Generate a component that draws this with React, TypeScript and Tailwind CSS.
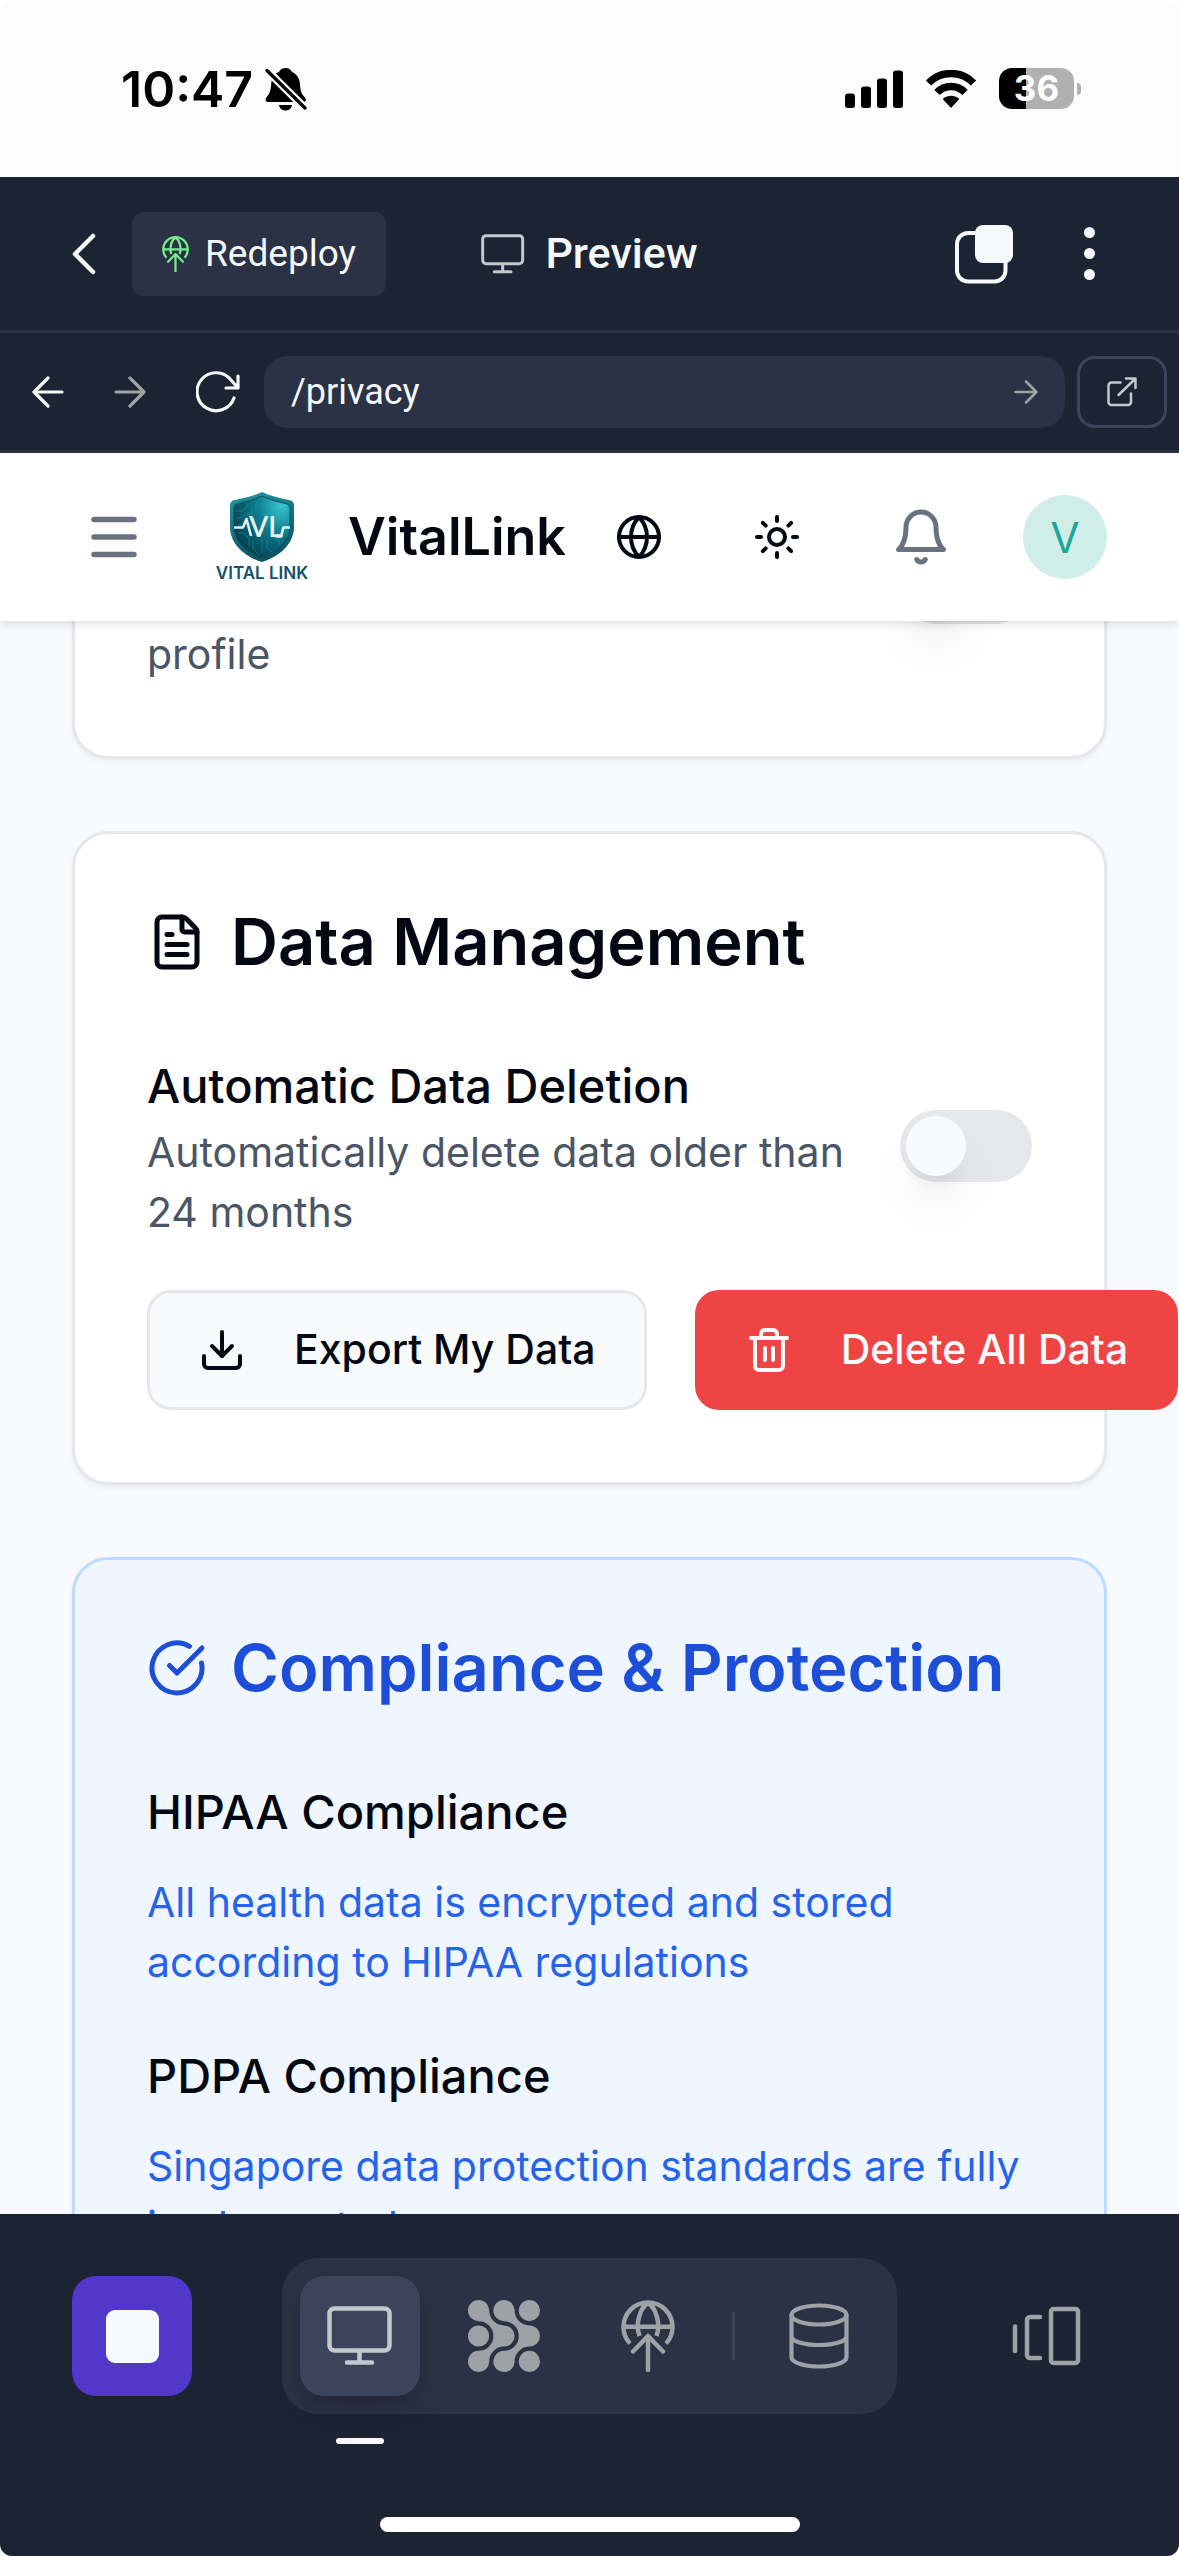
import { useState } from "react";
import type { ReactNode } from "react";
import { Menu, Globe, Sun, FileText, Download, Trash2, CircleCheckBig } from "lucide-react";

type GlyphProps = { box: string; className: string; width?: number; children: ReactNode };

function Glyph({ box, className, width = 4, children }: GlyphProps) {
  return (
    <svg
      viewBox={box}
      className={className}
      fill="none"
      stroke="currentColor"
      strokeWidth={width}
      strokeLinecap="round"
      strokeLinejoin="round"
      aria-hidden="true"
    >
      {children}
    </svg>
  );
}

function MonitorGlyph({ className }: { className: string }) {
  return (
    <Glyph box="0 0 66 60" className={className} width={4.5}>
      <rect x="2.5" y="2.5" width="60" height="42" rx="5" />
      <path d="M32.5 45v11.500M20 56.500h25" />
    </Glyph>
  );
}

function DeployGlyph({ className }: { className: string }) {
  return (
    <Glyph box="0 0 54 72" className={className} width={4.5}>
      <path strokeLinecap="butt" d="M9 43.500A24.500 24.500 0 1 1 45 43.500" />
      <path strokeLinecap="butt" d="M3 26.700H51M18.500 36C14 24 19 8 27 3C35 8 40 24 35.500 36" />
      <path d="M12 51.500L27 36L42 51.500M27 37V70" />
    </Glyph>
  );
}

function AgentGlyph() {
  const chain =
    "M21.200 10.600A10.600 10.600 0 1 0 10.600 21.200A14.800 14.800 0 0 1 25.400 36A14.800 14.800 0 0 1 10.600 50.800A10.600 10.600 0 1 0 21.200 61.400A14.800 14.800 0 0 1 36 46.600A10.600 10.600 0 0 0 36 25.400A14.800 14.800 0 0 1 21.200 10.600Z";
  return (
    <svg viewBox="0 0 72 72" className="size-[72px]" fill="currentColor" aria-hidden="true">
      <path d={chain} />
      <path d={chain} transform="translate(25.400 0)" />
      <circle cx="10.600" cy="36" r="10.600" />
      <circle cx="61.400" cy="10.600" r="10.600" />
      <circle cx="61.400" cy="61.400" r="10.600" />
    </svg>
  );
}

function StatusBar() {
  return (
    <div className="flex h-[177px] shrink-0 items-center justify-between rounded-t-xl bg-[#fcfcfc] pr-[98px] pl-[121px] text-black">
      <div className="flex items-center gap-3">
        <span className="text-[50px] leading-none font-semibold">10:47</span>
        <svg viewBox="0 0 42 44" className="h-11 w-[42px]" aria-label="Silent mode">
          <path
            fill="currentColor"
            d="M20.500 1c3 0 5.500 1.500 6.500 4 5 2 7.500 6.500 8 12 .4 7.500 1.500 10 5 13.500 1.800 2.400.8 4.500-1.500 4.500H3.500C.8 35-.2 33 1.300 30.500 5 26.500 5.700 23.500 6.200 17c.4-5.500 2.800-10 7.800-12 1-2.500 3.500-4 6.500-4zM14 38h13c-.5 3.400-3 5.500-6.500 5.500S14.500 41.400 14 38z"
          />
          <path stroke="#fcfcfc" strokeWidth="8" d="M0 1.500L42 43" />
          <path stroke="currentColor" strokeWidth="3.300" strokeLinecap="round" d="M2 3.500L40 41" />
        </svg>
      </div>
      <div className="flex items-center gap-[22px]">
        <svg viewBox="0 0 58 38" className="h-[38px] w-[58px]" fill="currentColor" aria-label="Signal">
          <rect x="0" y="23.500" width="10" height="14.500" rx="3" />
          <rect x="16" y="16.500" width="10" height="21.500" rx="3" />
          <rect x="32" y="8.500" width="10" height="29.500" rx="3" />
          <rect x="48" y="0.500" width="10" height="37.500" rx="3" />
        </svg>
        <svg viewBox="0 0 52 38" className="h-[38px] w-[52px]" fill="none" stroke="currentColor" aria-label="Wi-Fi">
          <path strokeWidth="7.500" d="M3.500 13A31.500 31.500 0 0 1 48.500 13" />
          <path strokeWidth="7.500" d="M12 22.500A19.500 19.500 0 0 1 40 22.500" />
          <path fill="currentColor" stroke="none" d="M26 38L18.300 29.800C17.900 29.300 18 28.700 18.500 28.300C22.700 24.900 29.300 24.900 33.500 28.300C34 28.700 34.100 29.300 33.700 29.800Z" />
        </svg>
        <div className="flex items-center gap-[3px]">
          <div className="flex h-[41px] w-[75px] items-center justify-center rounded-[13px] bg-linear-to-r from-black from-36% to-[#b0b0b0] to-36%">
            <span className="text-[35px] leading-none font-bold text-white">36</span>
          </div>
          <div className="h-3 w-1 rounded-r-full bg-[#b0b0b0]" />
        </div>
      </div>
    </div>
  );
}

function WorkspaceHeader() {
  return (
    <header className="grid h-[156px] shrink-0 grid-cols-[1fr_auto_1fr] items-center border-b-[3px] border-[#2b3245] bg-[#1c2333] px-[72px] font-[Roboto,sans-serif] text-[#f5f9fc]">
      <div className="flex items-center gap-9">
        <button aria-label="Back">
          <Glyph box="0 0 24 42" className="h-[42px] w-6" width={4.5}>
            <path d="M21 3L3 21L21 39" />
          </Glyph>
        </button>
        <button className="flex h-[84px] items-center gap-4 rounded-xl bg-[#2b3245] px-[30px] text-[37px]">
          <DeployGlyph className="h-9 w-[27px] text-[#75ed8b]" />
          Redeploy
        </button>
      </div>
      <h1 className="flex items-center gap-5 text-[43px] font-medium">
        <MonitorGlyph className="h-10 w-11 text-[#c2c8cc]" />
        Preview
      </h1>
      <div className="flex items-center justify-end gap-[70px] pr-3">
        <button aria-label="Open tabs">
          <Glyph box="0 0 60 60" className="size-[60px]">
            <rect x="3" y="9" width="48.500" height="48.500" rx="11" />
            <rect x="21" y="1" width="38" height="38" rx="8" fill="currentColor" stroke="none" />
          </Glyph>
        </button>
        <button aria-label="More options" className="flex w-[11px] flex-col gap-[10px]">
          <span className="size-[11px] rounded-full bg-current" />
          <span className="size-[11px] rounded-full bg-current" />
          <span className="size-[11px] rounded-full bg-current" />
        </button>
      </div>
    </header>
  );
}

function AddressBar() {
  const [path, setPath] = useState("/privacy");
  return (
    <div className="flex h-[120px] shrink-0 items-center gap-3 border-b-[3px] border-[#2b3245] bg-[#1c2333] pr-3 font-[Roboto,sans-serif] text-[#f5f9fc]">
      <nav className="flex w-[252px] items-center justify-between pr-3 pl-8">
        <button aria-label="Previous page">
          <Glyph box="0 0 32 32" className="size-8" width={3.2}>
            <path d="M30 16H2M16 2L2 16L16 30" />
          </Glyph>
        </button>
        <button aria-label="Next page" className="text-[#9da2a6]">
          <Glyph box="0 0 32 32" className="size-8" width={3.2}>
            <path d="M2 16H30M16 2L30 16L16 30" />
          </Glyph>
        </button>
        <button aria-label="Reload" className="shrink-0">
          <Glyph box="0 0 44 42" className="h-[42px] w-11" width={3.2}>
            <path d="M38 27A19 19 0 1 1 35 9L42 17M42 5V17H30" />
          </Glyph>
        </button>
      </nav>
      <div className="flex h-[72px] min-w-0 flex-1 items-center rounded-3xl bg-[#2b3245] px-[27px]">
        <input
          aria-label="Address"
          value={path}
          onChange={(event) => setPath(event.target.value)}
          className="h-[60px] min-w-0 flex-1 bg-transparent text-4xl outline-none"
        />
        <Glyph box="0 0 24 24" className="size-6 text-[#9da2a6]" width={2.5}>
          <path d="M1.500 12H22M12 1.500L22.500 12L12 22.500" />
        </Glyph>
      </div>
      <a
        href="/privacy"
        aria-label="Open in new tab"
        className="flex h-[72px] w-[90px] items-center justify-center rounded-[18px] border-[3px] border-[#3c445c] text-[#c2c8cc]"
      >
        <Glyph box="0 0 30 30" className="size-[30px]" width={2.5}>
          <path d="M13.500 5.500H4.500A3 3 0 0 0 1.500 8.500V25A3 3 0 0 0 4.500 28H21A3 3 0 0 0 24 25V16.500M19 1.500H28.500V11M28 2L11.500 18" />
        </Glyph>
      </a>
    </div>
  );
}

function VitalLogo() {
  return (
    <div className="flex w-[120px] flex-col items-center gap-1 pb-1 text-[#0f5468]">
      <svg viewBox="0 0 66 72" className="h-[72px] w-[66px]" role="img" aria-label="Vital Link shield">
        <defs>
          <linearGradient id="shieldRim" x1="0" y1="0" x2="0.300" y2="1">
            <stop offset="0" stopColor="#2196a3" />
            <stop offset="1" stopColor="#0b5366" />
          </linearGradient>
          <radialGradient id="shieldFace" cx="0.850" cy="0.150" r="0.950">
            <stop offset="0" stopColor="#3cc6d2" />
            <stop offset="0.450" stopColor="#0c8090" />
            <stop offset="1" stopColor="#053f50" />
          </radialGradient>
        </defs>
        <path fill="url(#shieldRim)" d="M33 1C41 5 51 7 62 9.500Q65 10.500 65 15V36C65 53 50 66 33 71C16 66 1 53 1 36V15Q1 10.500 4 9.500C15 7 25 5 33 1Z" />
        <path fill="url(#shieldFace)" stroke="#06505f" strokeWidth="1" d="M33 5C41 9 50 11 58 13Q61 14 61 17V36C61 50 48 62 33 67C18 62 5 50 5 36V17Q5 14 8 13C16 11 25 9 33 5Z" />
        <path
          fill="none"
          stroke="#27a9b8"
          strokeWidth="0.600"
          opacity="0.700"
          d="M6 20H14L18 16V11M7 27H12L16 23H23V16M27 20V11L31 7M36 17L42 12H50M44 20H51L56 16M52 26L57 22M9 42H15L20 48V56M24 49V58L30 64M33 48V62M38 49V57L43 61M45 46L50 50V54M48 43H56M7 34H13"
        />
        <path fill="none" stroke="#e6eff2" strokeWidth="2.600" strokeLinejoin="round" d="M5 36.500H14L17.500 28L22 45M47 45.500H52L54.500 36.500H61" />
        <text x="20" y="46" fill="#e6eff2" fontSize="28" fontWeight="600" fontFamily="Lato, sans-serif">
          VL
        </text>
      </svg>
      <span className="text-[17px] leading-3 font-semibold whitespace-nowrap">VITAL LINK</span>
    </div>
  );
}

function AppHeader() {
  return (
    <header className="relative z-10 flex h-[168px] shrink-0 items-center bg-white pr-[72px] pl-[84px] text-[#030712] shadow-[0_3px_9px_rgba(0,0,0,0.12)]">
      <button aria-label="Open menu" className="mr-[58px] text-gray-500">
        <Menu className="size-[60px]" strokeWidth={2.2} />
      </button>
      <VitalLogo />
      <span className="ml-[26px] text-[52px] leading-none font-semibold">VitalLink</span>
      <div className="ml-auto flex items-center">
        <button aria-label="Language" className="mr-[90px]">
          <Globe className="size-12" />
        </button>
        <button aria-label="Theme" className="mr-[90px]">
          <Sun className="size-12" />
        </button>
        <button aria-label="Notifications" className="mr-[72px] text-gray-500">
          <Glyph box="0 0 24 24" className="size-[60px]" width={2}>
            <path d="M6 8a6 6 0 0 1 12 0c0 7 3 9 3 9H3s3-2 3-9M10.300 21a1.940 1.940 0 0 0 3.400 0" />
          </Glyph>
        </button>
        <button aria-label="Account" className="size-[84px] rounded-full bg-[#d0ede8] text-[42px] text-[#1aa798]">
          V
        </button>
      </div>
    </header>
  );
}

function Toggle({ label }: { label: string }) {
  const [on, setOn] = useState(false);
  return (
    <label className="flex h-[72px] w-[132px] shrink-0 rounded-full bg-gray-200 p-1.5 has-checked:justify-end has-checked:bg-teal-500">
      <input type="checkbox" role="switch" aria-label={label} checked={on} onChange={() => setOn(!on)} className="sr-only" />
      <span className="size-[60px] rounded-full bg-[#f9fafb] shadow-[0_30px_45px_-9px_rgba(0,0,0,0.1),0_12px_18px_-12px_rgba(0,0,0,0.1)]" />
    </label>
  );
}

const regulations = [
  { name: "HIPAA Compliance", detail: "All health data is encrypted and stored according to HIPAA regulations" },
  { name: "PDPA Compliance", detail: "Singapore data protection standards are fully implemented" },
];

function PrivacyPage() {
  return (
    <main className="min-h-0 flex-1 overflow-hidden bg-[#f9fafc] px-[72px] text-[#030712]">
      <div className="-mt-[204px] flex flex-col gap-[72px]">
        <section className="rounded-[36px] border-[3px] border-gray-200 bg-white p-[72px] shadow-[0_3px_6px_rgba(0,0,0,0.05)]">
          <div className="flex h-[192px] items-center justify-between">
            <p className="self-end text-[41px] leading-[60px] text-gray-600">profile</p>
            <Toggle label="Profile sharing" />
          </div>
        </section>

        <section className="rounded-[36px] border-[3px] border-gray-200 bg-white p-[72px] shadow-[0_3px_6px_rgba(0,0,0,0.05)]">
          <h2 className="flex items-center gap-6 text-[65px] leading-[72px] font-semibold whitespace-nowrap">
            <FileText className="size-[60px] shrink-0" />
            Data Management
          </h2>
          <div className="mt-[72px] flex items-center justify-between gap-12">
            <div>
              <h3 className="text-[47px] leading-[72px] font-medium">Automatic Data Deletion</h3>
              <p className="text-[41px] leading-[60px] text-gray-600">Automatically delete data older than 24 months</p>
            </div>
            <Toggle label="Automatic Data Deletion" />
          </div>
          <div className="mt-12 flex gap-12">
            <button className="flex h-[120px] shrink-0 items-center gap-12 rounded-3xl border-[3px] border-gray-200 bg-[#f9fafc] px-12 text-[41px] font-medium">
              <Download className="size-12" />
              Export My Data
            </button>
            <button className="flex h-[120px] shrink-0 items-center gap-12 rounded-3xl bg-[#ef4444] px-[50px] text-[41px] font-medium text-[#f9fafb]">
              <Trash2 className="size-12" />
              Delete All Data
            </button>
          </div>
        </section>

        <section className="rounded-[36px] border-[3px] border-blue-200 bg-[#eff6ff] p-[72px] shadow-[0_3px_6px_rgba(0,0,0,0.05)]">
          <h2 className="flex items-center gap-6 text-[65px] leading-[72px] font-semibold whitespace-nowrap text-[#1d4ed8]">
            <CircleCheckBig className="size-[60px] shrink-0" />
            Compliance &amp; Protection
          </h2>
          <div className="mt-[72px] flex flex-col gap-12">
            {regulations.map((item) => (
              <div key={item.name}>
                <h3 className="text-[47px] leading-[72px] font-medium">{item.name}</h3>
                <p className="mt-6 text-[41px] leading-[60px] text-[#2563eb]">{item.detail}</p>
              </div>
            ))}
          </div>
        </section>
      </div>
    </main>
  );
}

function WorkspaceDock() {
  return (
    <footer className="flex h-[342px] shrink-0 flex-col items-center rounded-b-xl bg-[#1c2333] pt-11 pb-6 text-[#9da2a6]">
      <div className="flex w-full items-center justify-between px-[72px]">
        <button aria-label="Stop" className="flex size-[120px] items-center justify-center rounded-3xl bg-[#5238ca]">
          <span className="size-[53px] rounded-[9px] bg-[#f5f9fc]" />
        </button>
        <nav className="flex items-center gap-6 rounded-[36px] bg-[#2b3245] p-[18px]">
          <button
            aria-label="Preview"
            aria-current="page"
            className="relative flex size-[120px] items-center justify-center rounded-3xl bg-[#3c445c] text-[#c2c8cc] shadow-[0_12px_24px_rgba(2,2,3,0.2)]"
          >
            <MonitorGlyph className="h-[60px] w-[66px]" />
            <span className="absolute -bottom-12 h-1.5 w-12 rounded-full bg-[#f5f9fc]" />
          </button>
          <button aria-label="Agent" className="flex size-[120px] items-center justify-center">
            <AgentGlyph />
          </button>
          <button aria-label="Deployments" className="flex size-[120px] items-center justify-center">
            <DeployGlyph className="h-[72px] w-[54px]" />
          </button>
          <span className="h-12 w-[3px] bg-[#3c445c]" />
          <button aria-label="Database" className="flex size-[120px] items-center justify-center">
            <Glyph box="0 0 60 66" className="h-[66px] w-[60px]" width={4.2}>
              <ellipse cx="30" cy="12" rx="27.500" ry="9.500" />
              <path d="M2.500 12V54C2.500 59.500 14.500 63.500 30 63.500S57.500 59.500 57.500 54V12M2.500 33C2.500 38.500 14.500 42 30 42S57.500 38.500 57.500 33" />
            </Glyph>
          </button>
        </nav>
        <button aria-label="Switch tabs" className="flex size-[120px] items-center justify-center">
          <Glyph box="0 0 70 60" className="h-[60px] w-[70px]" width={4.5}>
            <path d="M3 20.500V45M28 11H18A3 3 0 0 0 15 14V49A3 3 0 0 0 18 52H28" />
            <rect x="39" y="3" width="27" height="54" rx="2.500" />
          </Glyph>
        </button>
      </div>
      <div className="mt-auto h-[15px] w-[420px] rounded-full bg-white" />
    </footer>
  );
}

export default function App() {
  return (
    <div className="flex h-screen flex-col overflow-hidden bg-white font-[Inter,sans-serif]">
      <StatusBar />
      <WorkspaceHeader />
      <AddressBar />
      <AppHeader />
      <PrivacyPage />
      <WorkspaceDock />
    </div>
  );
}
